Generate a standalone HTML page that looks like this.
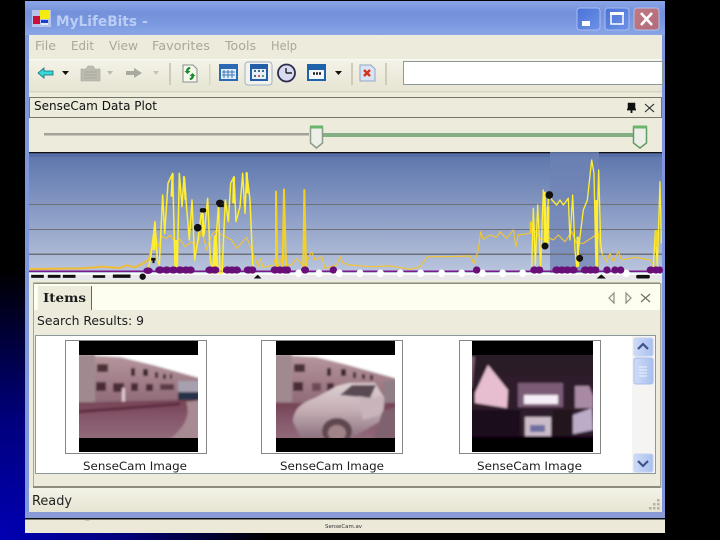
<!DOCTYPE html>
<html><head><meta charset="utf-8"><style>
html,body{margin:0;padding:0;background:#000;width:720px;height:540px;overflow:hidden}
svg{display:block}
text{font-family:"DejaVu Sans","Liberation Sans",sans-serif}
</style></head><body>
<svg width="720" height="540" viewBox="0 0 720 540" xmlns="http://www.w3.org/2000/svg">
<defs>
<radialGradient id="bg" gradientUnits="userSpaceOnUse" cx="0" cy="540" r="270"><stop offset="0" stop-color="#0000b4"/><stop offset=".45" stop-color="#00007c"/><stop offset="1" stop-color="#000"/></radialGradient>
<linearGradient id="title" x1="0" y1="0" x2="0" y2="1"><stop offset="0" stop-color="#8aa6e8"/><stop offset=".35" stop-color="#7390da"/><stop offset=".7" stop-color="#7c9ae0"/><stop offset="1" stop-color="#8aa6e8"/></linearGradient>
<linearGradient id="plot" x1="0" y1="0" x2="0" y2="1"><stop offset="0" stop-color="#5c75ac"/><stop offset=".5" stop-color="#8b9dc5"/><stop offset="1" stop-color="#bcc7de"/></linearGradient>
<linearGradient id="tb" x1="0" y1="0" x2="0" y2="1"><stop offset="0" stop-color="#f4f3e8"/><stop offset="1" stop-color="#e6e4d2"/></linearGradient>
<linearGradient id="btn" x1="0" y1="0" x2="1" y2="1"><stop offset="0" stop-color="#4a72d8"/><stop offset="1" stop-color="#6e92e6"/></linearGradient>
<linearGradient id="cl" x1="0" y1="0" x2="1" y2="1"><stop offset="0" stop-color="#c07a84"/><stop offset="1" stop-color="#b46a78"/></linearGradient>
<linearGradient id="sb" x1="0" y1="0" x2="1" y2="0"><stop offset="0" stop-color="#cfdcf8"/><stop offset="1" stop-color="#a8bfee"/></linearGradient>
<linearGradient id="wall" x1="0" y1="0" x2="0" y2="1"><stop offset="0" stop-color="#b8989f"/><stop offset="1" stop-color="#8c6674"/></linearGradient>
<linearGradient id="road" x1="0" y1="0" x2="0" y2="1"><stop offset="0" stop-color="#744253"/><stop offset=".4" stop-color="#85566a"/><stop offset="1" stop-color="#936e7c"/></linearGradient>
<linearGradient id="car" x1="0" y1="0" x2="0" y2="1"><stop offset="0" stop-color="#ded0d2"/><stop offset=".5" stop-color="#c4aeb4"/><stop offset="1" stop-color="#8e7280"/></linearGradient>
<filter id="b1" x="-5%" y="-5%" width="110%" height="110%"><feGaussianBlur stdDeviation="1"/></filter>
<filter id="b0" x="-2%" y="-2%" width="104%" height="104%"><feGaussianBlur stdDeviation=".2"/></filter>
<clipPath id="p1"><rect x="79" y="355" width="119" height="83"/></clipPath>
<clipPath id="p2"><rect x="276" y="355" width="119" height="83"/></clipPath>
<clipPath id="p3"><rect x="472" y="355" width="121" height="83"/></clipPath>
</defs>

<rect width="720" height="540" fill="#000"/>
<rect width="25" height="540" fill="url(#bg)"/>
<rect y="533" width="400" height="7" fill="url(#bg)"/>

<!-- window -->
<rect x="25" y="1" width="640" height="518" fill="#7e96dc"/>
<rect x="25" y="1" width="640" height="34" fill="url(#title)"/>
<rect x="29" y="35" width="633" height="477" fill="#ecebdc"/>
<rect x="25" y="512" width="640" height="6" fill="#8a9ad6"/>
<rect x="25" y="518" width="640" height="1.5" fill="#111"/>
<rect x="25" y="519.5" width="640" height="13.5" fill="#ece9d9"/>
<text x="325" y="528" font-size="5" fill="#333" textLength="37" lengthAdjust="spacingAndGlyphs">SenseCam.av</text>
<text x="85" y="521" font-size="5" fill="#555">...</text>

<!-- title -->
<rect x="32" y="10" width="19" height="17" fill="#b7c5ea"/>
<rect x="33" y="16" width="7" height="8" fill="#c8103c"/>
<rect x="40" y="10" width="10" height="9" fill="#f4ec10"/>
<rect x="41" y="20" width="7" height="3" fill="#1840c8"/>
<rect x="41" y="23" width="7" height="2" fill="#e8e8f8"/>
<text x="56" y="26" font-size="14" font-weight="bold" fill="#bccdf3" textLength="81" lengthAdjust="spacingAndGlyphs">MyLifeBits</text>
<text x="142" y="26" font-size="14" font-weight="bold" fill="#bccdf3">-</text>
<rect x="577" y="8" width="23" height="22" rx="3" fill="url(#btn)" stroke="#a8bcf0"/>
<rect x="582" y="21" width="8" height="5" fill="#fff"/>
<rect x="605" y="8" width="24" height="22" rx="3" fill="url(#btn)" stroke="#a8bcf0"/>
<rect x="611" y="13" width="12" height="11" fill="none" stroke="#fff" stroke-width="1.5"/><rect x="610" y="12" width="14" height="3" fill="#fff"/>
<rect x="634" y="8" width="25" height="22" rx="3" fill="url(#cl)" stroke="#b4bfe8"/>
<path d="M641 13l11 12M652 13l-11 12" stroke="#fff" stroke-width="2.6" fill="none"/>

<!-- menu -->
<g font-size="12" fill="#a9a89b">
<text x="35" y="50" textLength="21" lengthAdjust="spacingAndGlyphs">File</text>
<text x="71" y="50" textLength="23" lengthAdjust="spacingAndGlyphs">Edit</text>
<text x="109" y="50" textLength="29" lengthAdjust="spacingAndGlyphs">View</text>
<text x="152" y="50" textLength="58" lengthAdjust="spacingAndGlyphs">Favorites</text>
<text x="225" y="50" textLength="31" lengthAdjust="spacingAndGlyphs">Tools</text>
<text x="271" y="50" textLength="26" lengthAdjust="spacingAndGlyphs">Help</text>
</g>

<!-- toolbar -->
<rect x="29" y="59" width="633" height="1.5" fill="#fafaf4"/>
<rect x="29" y="60" width="633" height="31" fill="url(#tb)"/>
<rect x="29" y="91" width="633" height="1.5" fill="#d9d6c4"/>
<path d="M38 73l6-5v3h9v4h-9v3z" fill="#38d8d8" stroke="#0c6a78" stroke-width=".8"/>
<path d="M62 71h7l-3.500 4z" fill="#111"/>
<path d="M81 69h5l2-3h5l2 3h5v12h-19z" fill="#bdbcb0" stroke="#a5a498" stroke-width=".6"/>
<path d="M84 72h13M84 75h13M84 78h13" stroke="#a8a79c" stroke-width="1"/>
<path d="M107 71h6l-3 4z" fill="#bcbbb0"/>
<path d="M126 71h8v-3l8 5-8 5v-3h-8z" fill="#aaa99e"/>
<path d="M153 71h6l-3 4z" fill="#c4c3b8"/>
<rect x="169" y="63" width="2" height="22" fill="#cfcbb6"/>
<path d="M183 65h10l4 4v13h-14z" fill="#f6f7ee" stroke="#8b8f88"/>
<path d="M190 67a4 4 0 0 0-4 4h-1.500l3 3 3-3h-2a2 2 0 0 1 2-2z" fill="#1a8a2c"/>
<path d="M190 80a4 4 0 0 0 4-4h1.500l-3-3-3 3h2a2 2 0 0 1-2 2z" fill="#1a8a2c"/>
<rect x="209" y="64" width="1.500" height="21" fill="#d8d5c2"/>
<rect x="219" y="64" width="19" height="17" fill="#2a6ab4"/>
<rect x="221" y="69" width="15" height="10" fill="#e4ecf4"/>
<path d="M224 70v8M228 70v8M232 70v8M222 72h13M222 75h13" stroke="#3c78b8" stroke-width="1"/>
<rect x="245" y="62" width="27" height="23" rx="3" fill="#f2f3ec" stroke="#9fb0c6"/>
<rect x="250" y="64" width="18" height="17" fill="#235fa8"/>
<rect x="252" y="69" width="14" height="10" fill="#e8eef4"/>
<g fill="#3a6a90"><rect x="254" y="70" width="2" height="2"/><rect x="258" y="70" width="2" height="2"/><rect x="262" y="70" width="2" height="2"/><rect x="254" y="75" width="2" height="2"/></g>
<rect x="258" y="75" width="2" height="2" fill="#c06068"/><rect x="262" y="75" width="2" height="2" fill="#58a070"/>
<circle cx="286.500" cy="73" r="8.500" fill="#d8dcf0" stroke="#2c2c4c" stroke-width="1.800"/>
<path d="M286 73h6M286 68v5" stroke="#222" stroke-width="1.400"/>
<rect x="307" y="64" width="19" height="17" fill="#1f62ac"/>
<rect x="309" y="70" width="15" height="9" fill="#f4f6fa"/>
<path d="M313 73.500h2M316 73.500h2M319 73.500h2" stroke="#222" stroke-width="2.500"/>
<path d="M335 71h7l-3.500 4z" fill="#111"/>
<rect x="351" y="63" width="2" height="22" fill="#cfcbb6"/>
<path d="M360 65h11l4 4v12h-15z" fill="#d8e4f4" stroke="#8fa6c8"/>
<path d="M364 70l6 6M370 70l-6 6" stroke="#d83018" stroke-width="2.400"/>
<rect x="385" y="63" width="2" height="22" fill="#d0ccb8"/>
<rect x="403.500" y="61.500" width="259" height="23" fill="#fff" stroke="#8f9a98"/>

<!-- panel header -->
<rect x="29.500" y="97.500" width="632" height="20" fill="#ecebdc" stroke="#777768"/>
<text x="34" y="110" font-size="12.500" fill="#111" textLength="123" lengthAdjust="spacingAndGlyphs">SenseCam Data Plot</text>
<path d="M628.500 103.500h6v5h-6z" fill="#111" stroke="#111" stroke-width="1.500"/><path d="M627 109.500h9M631.500 109v4" stroke="#111" stroke-width="1.800" fill="none"/>
<path d="M645 104l9 8M654 104l-9 8" stroke="#222" fill="none"/>

<!-- slider -->
<rect x="44" y="133" width="265" height="2.500" fill="#a3a297"/>
<rect x="322" y="133" width="312" height="4" fill="#84ae84"/>
<path d="M310.500 127h12v16l-6 5-6-5z" fill="#eeeee8" stroke="#8c9c88" stroke-width="1.500"/>
<rect x="310" y="125.500" width="13" height="3" fill="#6cb46c"/>
<path d="M633.500 127h13v16l-6.500 5-6.500-5z" fill="#eeeee8" stroke="#609c60" stroke-width="1.500"/>
<rect x="633" y="125.500" width="14" height="3" fill="#6cb46c"/>

<!-- plot -->
<rect x="29" y="153" width="633" height="122" fill="url(#plot)"/>
<rect x="29" y="152" width="633" height="1.500" fill="#111"/>
<rect x="29" y="153" width="633" height="4" fill="#4e669f" opacity=".5"/>
<rect x="550" y="152" width="49" height="127" fill="#6f83b4" opacity=".75"/>
<g fill="#6f6f78"><rect x="29" y="204" width="633" height="1"/><rect x="29" y="229" width="633" height="1"/><rect x="29" y="253.500" width="633" height="1.500"/></g>
<rect x="29" y="275" width="633" height="5" fill="#e8e8e8"/>
<rect x="29" y="273" width="633" height="2" fill="#fafafa"/>
<rect x="29" y="270.500" width="633" height="1.500" fill="#7a1a8a"/>

<g fill="none" stroke-linejoin="round" filter="url(#b0)">
<g transform="translate(20 150) scale(.33333)">
<polyline stroke="#f0bd30" stroke-width="6" points="30,357 180,355 200,354 225,352 240,350 300,354 320,346 345,352 370,340 385,330"/>
<polyline stroke="#f0c434" stroke-width="3.500" points="385,330 395,290 403,240 415,290 425,260 440,265 450,255 465,275 480,268 495,290 515,275 530,295 545,240 560,300 575,255 590,240 605,255 620,262 635,270 650,295 680,262 695,300 715,350 720,325 730,352 760,345 768,320 775,350 790,310 800,345 815,345 830,325 848,345 855,345 875,305 885,330 905,320 915,355 950,345 960,320 970,340 990,345"/>
<polyline stroke="#f4d020" stroke-width="6" points="768,350 768,125 772,350"/>
<polyline stroke="#f4d020" stroke-width="6" points="788,350 792,118 798,350"/>
<polyline stroke="#f4d020" stroke-width="6" points="850,350 853,120 858,350"/>
<polyline stroke="#ffee30" stroke-width="4.500" points="385,355 392,325 405,215 412,330 418,345 428,135 434,250 444,100 458,70 465,350 472,350 478,70 486,170 492,80 500,175 508,270 516,150 524,330 535,260 545,180 553,250 563,145 571,330 580,370 590,240 596,160 600,370 606,370 616,150 625,215 632,100 642,80 648,215 660,170 668,70 675,190 680,68 690,150 698,340 705,370"/>
<polyline stroke="#ffee30" stroke-width="7" points="492,80 497,150"/>
<polyline stroke="#ffee30" stroke-width="9" points="580,370 586,260 592,370"/>
<polyline stroke="#ffee30" stroke-width="8" points="405,250 402,300"/>
<polyline stroke="#ffee30" stroke-width="7" points="548,190 550,260"/>
<polyline stroke="#ffee30" stroke-width="7" points="680,68 682,130"/>
<polyline stroke="#ffee30" stroke-width="7" points="458,72 455,140"/>
<polyline stroke="#ffee30" stroke-width="7" points="642,82 640,160"/>
<polyline stroke="#ffee30" stroke-width="6" points="468,270 470,350"/>
</g>
<g transform="translate(350 150) scale(.33333)">
<polyline stroke="#f0c434" stroke-width="3.500" points="0,345 60,350 120,348 180,358 210,350 232,320 300,320 360,318 372,340 385,300 392,245 400,268 420,255 440,262 450,245 470,265 490,240 498,290 505,255 540,250 548,225 556,245 575,270 590,260 610,270 625,255 645,275 665,245 680,280 700,280 745,250 755,310 770,335 780,310 790,335 805,305 815,330 855,322 900,330 915,350"/>
<polyline stroke="#ffee30" stroke-width="4" points="545,350 550,175 556,345 563,165 572,350 580,120 588,280 596,130 606,150 620,165 630,150 640,165 655,145 660,270 668,135 675,300 680,350 690,260 700,180 712,150 725,30 732,70 738,350 746,60 752,280 756,310"/>
<polyline stroke="#ffee30" stroke-width="8" points="583,125 586,290"/>
<polyline stroke="#ffee30" stroke-width="8" points="594,170 592,280"/>
<polyline stroke="#ffee30" stroke-width="9" points="740,150 741,350"/>
<polyline stroke="#ffee30" stroke-width="7" points="683,260 684,350"/>
<polyline stroke="#f0d020" stroke-width="8" points="543,215 543,250"/>
<polyline stroke="#ffee30" stroke-width="4" points="910,350 916,245 922,350 930,95 934,280"/>
<polyline stroke="#f4d820" stroke-width="8" points="918,240 920,290"/>
</g>
</g>

<!-- plot markers -->
<g transform="translate(20 150) scale(.33333)">
<g fill="#6a0f78" stroke="#6a0f78" stroke-width="4">
<ellipse cx="384" cy="362" rx="12" ry="8"/>
<ellipse cx="420" cy="360" rx="12" ry="9"/><ellipse cx="440" cy="360" rx="12" ry="9"/><ellipse cx="460" cy="360" rx="12" ry="9"/><ellipse cx="480" cy="360" rx="12" ry="9"/><ellipse cx="498" cy="360" rx="12" ry="9"/><ellipse cx="512" cy="360" rx="10" ry="9"/>
<ellipse cx="570" cy="360" rx="12" ry="9"/><ellipse cx="585" cy="360" rx="11" ry="9"/>
<ellipse cx="622" cy="360" rx="11" ry="9"/><ellipse cx="636" cy="360" rx="11" ry="9"/><ellipse cx="650" cy="360" rx="11" ry="9"/>
<ellipse cx="685" cy="360" rx="12" ry="9"/><ellipse cx="697" cy="360" rx="10" ry="9"/>
<ellipse cx="765" cy="360" rx="11" ry="9"/><ellipse cx="780" cy="360" rx="11" ry="9"/><ellipse cx="795" cy="360" rx="11" ry="9"/><ellipse cx="803" cy="360" rx="8" ry="9"/>
<ellipse cx="855" cy="360" rx="10" ry="9"/><ellipse cx="940" cy="360" rx="9" ry="9"/>
</g>
<g fill="#fff" stroke="#fff" stroke-width="3"><ellipse cx="836" cy="370" rx="9" ry="10"/><ellipse cx="897" cy="370" rx="9" ry="10"/><ellipse cx="958" cy="370" rx="9" ry="10"/></g>
<g fill="#111" stroke="#111" stroke-width="3">
<path d="M395 325h10v5h-3v8h-3v-8h-4z"/><circle cx="533" cy="233" r="10"/><rect x="541" y="176" width="16" height="10" rx="4"/><path d="M590 162a10 8 0 0 1 20-6v4h-10v4h10v6h-14z"/>
<rect x="35" y="376" width="35" height="6"/><rect x="85" y="376" width="35" height="6"/><rect x="130" y="376" width="35" height="6"/><rect x="220" y="377" width="34" height="5"/><rect x="280" y="375" width="50" height="7"/><circle cx="368" cy="380" r="8"/><path d="M705 384l8-8 8 8z"/>
</g>
</g>
<g transform="translate(350 150) scale(.33333)">
<g fill="#fff" stroke="#fff" stroke-width="3"><ellipse cx="30" cy="370" rx="9" ry="10"/><ellipse cx="91" cy="370" rx="9" ry="10"/><ellipse cx="151" cy="370" rx="9" ry="10"/><ellipse cx="212" cy="370" rx="9" ry="10"/><ellipse cx="275" cy="370" rx="9" ry="10"/><ellipse cx="335" cy="370" rx="9" ry="10"/><ellipse cx="397" cy="370" rx="9" ry="10"/><ellipse cx="458" cy="370" rx="9" ry="10"/><ellipse cx="518" cy="370" rx="9" ry="10"/><ellipse cx="828" cy="370" rx="10" ry="10"/></g>
<g fill="#6a0f78" stroke="#6a0f78" stroke-width="4">
<ellipse cx="380" cy="360" rx="9" ry="9"/>
<ellipse cx="553" cy="360" rx="10" ry="9"/><ellipse cx="568" cy="360" rx="10" ry="9"/>
<ellipse cx="620" cy="360" rx="11" ry="9"/><ellipse cx="636" cy="360" rx="11" ry="9"/><ellipse cx="652" cy="360" rx="11" ry="9"/><ellipse cx="670" cy="360" rx="11" ry="9"/>
<ellipse cx="706" cy="360" rx="11" ry="9"/><ellipse cx="722" cy="360" rx="11" ry="9"/><ellipse cx="736" cy="360" rx="10" ry="9"/>
<ellipse cx="771" cy="360" rx="9" ry="9"/><ellipse cx="795" cy="360" rx="9" ry="9"/><ellipse cx="812" cy="360" rx="9" ry="9"/>
<ellipse cx="902" cy="360" rx="10" ry="9"/><ellipse cx="918" cy="360" rx="10" ry="9"/><ellipse cx="930" cy="360" rx="7" ry="9"/>
</g>
<g fill="#111" stroke="#111" stroke-width="3">
<circle cx="598" cy="135" r="10"/><circle cx="585" cy="288" r="9"/><circle cx="689" cy="325" r="9"/>
<path d="M744 384l10-9 10 9z"/><rect x="860" y="376" width="38" height="8" rx="3"/>
</g>
</g>

<!-- items panel -->
<rect x="33" y="283" width="628" height="204" fill="#ecebdc"/>
<rect x="29" y="280" width="633" height="3" fill="#ecebdc"/>
<rect x="33" y="282.500" width="627" height="1.500" fill="#8c8c7c"/>
<rect x="33" y="284" width="627" height="26" fill="#fdfdf0"/>
<rect x="33" y="283" width="1" height="204" fill="#a8a898"/>
<rect x="38" y="286" width="53" height="24" fill="#ecebdc"/>
<rect x="91" y="286" width="1" height="24" fill="#66665c"/>
<text x="43" y="302" font-size="12" font-weight="bold" fill="#1c1c1c" style="font-family:'DejaVu Serif','Liberation Serif',serif" textLength="43" lengthAdjust="spacingAndGlyphs">Items</text>
<text x="37" y="325" font-size="12" fill="#1c1c1c" textLength="107" lengthAdjust="spacingAndGlyphs">Search Results: 9</text>
<path d="M614 293l-5 5 5 5z" fill="none" stroke="#8c8c80" stroke-width="1.200"/>
<path d="M626 293l5 5-5 5z" fill="none" stroke="#8c8c80" stroke-width="1.200"/>
<path d="M641 294l9 8M650 294l-9 8" stroke="#707068" stroke-width="1.200"/>
<rect x="33" y="486" width="628" height="2" fill="#8c8c7c"/>
<rect x="660" y="283" width="1.500" height="205" fill="#a8a898"/>
<rect x="29" y="488" width="633" height="24" fill="url(#tb)"/>
<text x="32" y="505" font-size="13" fill="#222" textLength="40" lengthAdjust="spacingAndGlyphs">Ready</text>
<g fill="#b4b2a4"><rect x="657" y="499" width="2.500" height="2.500"/><rect x="653" y="503" width="2.500" height="2.500"/><rect x="657" y="503" width="2.500" height="2.500"/><rect x="649" y="507" width="2.500" height="2.500"/><rect x="653" y="507" width="2.500" height="2.500"/><rect x="657" y="507" width="2.500" height="2.500"/></g>

<!-- list -->
<rect x="35.500" y="335.500" width="620" height="138" fill="#fff" stroke="#8a9a9a"/>
<rect x="632" y="336" width="23" height="137" fill="#f6f4f2"/>
<rect x="634" y="338" width="19" height="18" rx="2" fill="url(#sb)" stroke="#c4d2ee"/>
<path d="M638 349l5-5 5 5" stroke="#3c5488" stroke-width="2.200" fill="none"/>
<rect x="634" y="358" width="19" height="26" rx="2" fill="url(#sb)" stroke="#a8bce6"/>
<path d="M639 367h8M639 370h8M639 373h8M639 376h8" stroke="#eef2fc" stroke-width="1"/>
<rect x="634" y="454" width="19" height="18" rx="2" fill="url(#sb)" stroke="#c4d2ee"/>
<path d="M638 461l5 5 5-5" stroke="#3c5488" stroke-width="2.200" fill="none"/>

<!-- thumbs -->
<rect x="65.500" y="340.500" width="141" height="113" fill="#fff" stroke="#868686"/>
<rect x="261.500" y="340.500" width="141" height="113" fill="#fff" stroke="#868686"/>
<rect x="459.500" y="340.500" width="141" height="113" fill="#fff" stroke="#868686"/>
<rect x="79" y="341" width="119" height="111" fill="#000"/>
<rect x="276" y="341" width="119" height="111" fill="#000"/>
<rect x="472" y="341" width="121" height="111" fill="#000"/>

<!-- photo 1 -->
<g clip-path="url(#p1)"><g filter="url(#b1)">
<rect x="75" y="350" width="128" height="92" fill="#fff"/>
<path d="M70 354l50 3 33 8 50 14v28h-133z" fill="url(#wall)"/>
<path d="M70 354h25v48h-25z" fill="#a08a90"/>
<rect x="97" y="364" width="11" height="8" fill="#4a3036"/>
<rect x="131" y="368" width="4" height="8" fill="#3a2228"/><rect x="143" y="369" width="5" height="7" fill="#3a2228"/><rect x="155" y="372" width="3" height="6" fill="#3a2228"/><rect x="163" y="374" width="3" height="5" fill="#3a2228"/><rect x="170" y="374" width="2" height="5" fill="#3a2228"/>
<rect x="96" y="382" width="10" height="9" fill="#4a2c34"/><rect x="113" y="383" width="11" height="9" fill="#4a2c34"/><rect x="131" y="383" width="7" height="8" fill="#4a2c34"/><rect x="146" y="384" width="7" height="7" fill="#4a2c34"/><rect x="160" y="384" width="14" height="6" fill="#5a3a44"/>
<rect x="122" y="388" width="3" height="14" fill="#e0ccd0"/>
<rect x="178" y="381" width="22" height="13" fill="#a8a0b0"/>
<rect x="178" y="392" width="22" height="11" fill="#283048"/>
<path d="M70 403l110-3 22 0v42h-132z" fill="url(#road)"/>
<path d="M75 412l105-8" stroke="#5e2c40" stroke-width="3"/>
<path d="M186 402q8 20-20 40h36v-42z" fill="#a88a92"/>
</g></g>

<!-- photo 2 -->
<g clip-path="url(#p2)"><g filter="url(#b1)">
<rect x="272" y="350" width="128" height="92" fill="#fff"/>
<path d="M268 354l48 3 32 8 50 14v28h-130z" fill="url(#wall)"/>
<rect x="268" y="354" width="24" height="48" fill="#a08a90"/>
<rect x="294" y="364" width="11" height="8" fill="#4a3036"/>
<rect x="327" y="368" width="4" height="8" fill="#3a2228"/><rect x="341" y="369" width="5" height="7" fill="#3a2228"/><rect x="353" y="372" width="3" height="6" fill="#3a2228"/><rect x="362" y="374" width="3" height="5" fill="#3a2228"/><rect x="370" y="375" width="3" height="5" fill="#3a2228"/>
<rect x="293" y="382" width="10" height="9" fill="#4a2c34"/><rect x="312" y="383" width="9" height="8" fill="#6c4c56"/><rect x="327" y="383" width="7" height="8" fill="#4a2c34"/>
<path d="M268 403h132v39h-132z" fill="url(#road)"/>
<path d="M293 422q0-17 22-24l22-12 12-3h26l10 16-4 22-30 17h-50z" fill="url(#car)"/>
<path d="M340 395l12-10h24l-6 13z" fill="#5a4a52"/>
<path d="M358 396l12 2 15-2-2 18-20 6z" fill="#c8b4ba"/>
<rect x="384" y="381" width="12" height="22" fill="#8f7d88"/>
<ellipse cx="337" cy="431" rx="15" ry="13" fill="#604650"/><ellipse cx="337" cy="433" rx="9" ry="8" fill="#a08488"/>
<path d="M382 412l16-6v36h-25z" fill="#7e6270"/>
</g></g>

<!-- photo 3 -->
<g clip-path="url(#p3)"><g filter="url(#b1)">
<rect x="468" y="350" width="129" height="92" fill="#2f1b2c"/>
<rect x="468" y="350" width="129" height="25" fill="#2a1a26"/>
<path d="M475 393l13-28 20 25-1 18-32-5z" fill="#e6bed0"/>
<path d="M470 356l5 1-3 30-3 2z" fill="#7e6076"/>
<rect x="518" y="383" width="45" height="24" fill="#7a5c76"/>
<rect x="524" y="395" width="34" height="9" fill="#f6eef6"/>
<path d="M575 386h14l4 10v12h-18z" fill="#a88aa4"/>
<rect x="525" y="417" width="26" height="19" fill="#cbbcc8"/>
<rect x="530" y="425" width="15" height="7" fill="#7070a0"/>
<path d="M573 415l19-7 1 22-20 4z" fill="#bcacc8"/>
<rect x="468" y="410" width="52" height="32" fill="#1f0f1c"/>
<rect x="553" y="410" width="20" height="32" fill="#22121e"/>
<rect x="468" y="436" width="129" height="6" fill="#160612"/>
</g></g>

<g font-size="11.500" fill="#1c1c1c">
<text x="83" y="470" textLength="104" lengthAdjust="spacingAndGlyphs">SenseCam Image</text>
<text x="280" y="470" textLength="104" lengthAdjust="spacingAndGlyphs">SenseCam Image</text>
<text x="477" y="470" textLength="105" lengthAdjust="spacingAndGlyphs">SenseCam Image</text>
</g>
</svg>
</body></html>
